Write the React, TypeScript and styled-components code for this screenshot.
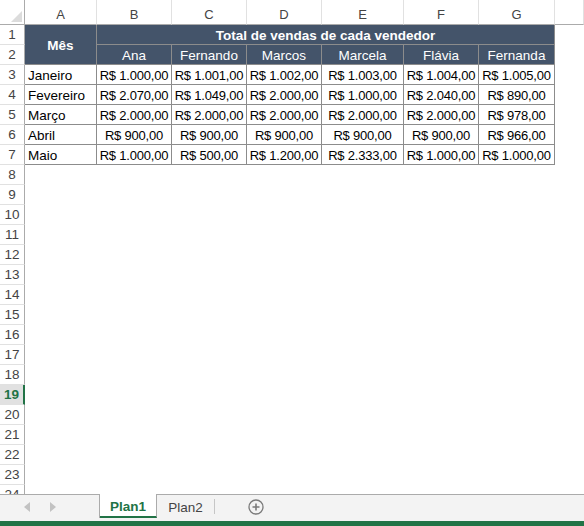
import React from "react";
import styled, { createGlobalStyle, css } from "styled-components";

const GlobalStyle = createGlobalStyle`
	* { box-sizing: border-box; }
	body {
		margin: 0;
		background: #fff;
		font-family: "Liberation Sans", Arial, sans-serif;
	}
`;

const COLUMNS = ["A", "B", "C", "D", "E", "F", "G", ""];
const SELLERS = ["Ana", "Fernando", "Marcos", "Marcela", "Flávia", "Fernanda"];
const SALES: [string, string[]][] = [
	["Janeiro", ["1.000,00", "1.001,00", "1.002,00", "1.003,00", "1.004,00", "1.005,00"]],
	["Fevereiro", ["2.070,00", "1.049,00", "2.000,00", "1.000,00", "2.040,00", "890,00"]],
	["Março", ["2.000,00", "2.000,00", "2.000,00", "2.000,00", "2.000,00", "978,00"]],
	["Abril", ["900,00", "900,00", "900,00", "900,00", "900,00", "966,00"]],
	["Maio", ["1.000,00", "500,00", "1.200,00", "2.333,00", "1.000,00", "1.000,00"]],
];
const ROW_COUNT = 24;
const ACTIVE_ROW = 19;

const Window = styled.div`
	width: 584px;
	height: 526px;
	display: flex;
	flex-direction: column;
	overflow: hidden;
`;

const SheetArea = styled.div`
	height: 494px;
	overflow: hidden;
	flex-shrink: 0;
`;

const Grid = styled.div`
	display: grid;
	grid-template-columns: 25px 72px 75px 75px 75px 82px 75px 76px 1fr;
	grid-template-rows: 25px repeat(${ROW_COUNT}, 20px);
	font-size: 13px;
	color: #000;
`;

const Corner = styled.div`
	border-right: 1px solid #ababab;
	border-bottom: 1px solid #ababab;
	display: flex;
	align-items: flex-end;
	justify-content: flex-end;
	padding: 0 2px 2px 0;
`;

const ColHeader = styled.div`
	border-bottom: 1px solid #ababab;
	border-right: 1px solid #e1e1e1;
	display: flex;
	align-items: center;
	justify-content: center;
	padding-top: 4px;
	color: #444;
`;

const RowHeader = styled.div<{ $active?: boolean }>`
	grid-column: 1;
	border-right: 1px solid #ababab;
	border-bottom: 1px solid #e1e1e1;
	display: flex;
	align-items: center;
	justify-content: center;
	color: #444;
	font-size: 13.5px;
	${(p) =>
		p.$active &&
		css`
			background: #e1e1e1;
			border-right: 2px solid #217346;
			color: #217346;
			font-weight: bold;
		`}
`;

const HeadCell = styled.div<{ $bold?: boolean; $cols?: number; $rows?: number }>`
	grid-column: span ${(p) => p.$cols ?? 1};
	grid-row: span ${(p) => p.$rows ?? 1};
	background: #44546a;
	color: #fff;
	border-right: 1px solid #8c8c8c;
	border-bottom: 1px solid #8c8c8c;
	display: flex;
	align-items: center;
	justify-content: center;
	padding-top: 1px;
	font-size: 13.5px;
	font-weight: ${(p) => (p.$bold ? "bold" : "normal")};
	white-space: nowrap;
`;

const Cell = styled.div<{ $left?: boolean }>`
	border-right: 1px solid #8c8c8c;
	border-bottom: 1px solid #8c8c8c;
	display: flex;
	align-items: center;
	justify-content: ${(p) => (p.$left ? "flex-start" : "center")};
	padding: 1px 3px 0;
	white-space: nowrap;
	overflow: hidden;
	font-size: ${(p) => (p.$left ? "13.5px" : "13px")};
	letter-spacing: ${(p) => (p.$left ? "0" : "-0.2px")};
`;

const Empty = styled.div``;

const TabBar = styled.div`
	height: 27px;
	flex-shrink: 0;
	background: #f3f3f3;
	border-top: 1px solid #ababab;
	display: flex;
	align-items: stretch;
`;

const NavArea = styled.div`
	width: 100px;
	display: flex;
	align-items: center;
	gap: 20px;
	padding-left: 24px;
	border-right: 1px solid #ababab;
	margin-bottom: 3px;
`;

const SheetTab = styled.div<{ $active?: boolean }>`
	width: 57px;
	display: flex;
	align-items: center;
	justify-content: center;
	font-size: 13.5px;
	color: #444;
	margin-bottom: 3px;
	padding-top: 2px;
	${(p) =>
		p.$active &&
		css`
			background: #fff;
			color: #217346;
			font-weight: bold;
			border-right: 1px solid #ababab;
			border-bottom: 2px solid #217346;
			margin-top: -1px;
			padding-top: 3px;
		`}
`;

const Divider = styled.div`
	width: 1px;
	background: #c6c6c6;
	margin: 4px 0 7px;
`;

const AddButton = styled.div`
	margin-left: 33px;
	display: flex;
	align-items: center;
	margin-bottom: 3px;
	padding-top: 1px;
`;

const StatusBar = styled.div`
	height: 5px;
	background: #217346;
	flex-shrink: 0;
`;

const Arrow = ({ dir }: { dir: "left" | "right" }) => (
	<svg width="6" height="10" viewBox="0 0 6 10">
		{dir === "left" ? (
			<polygon points="6,0 6,10 0,5" fill="#c2c2c2" />
		) : (
			<polygon points="0,0 0,10 6,5" fill="#c2c2c2" />
		)}
	</svg>
);

const App = () => {
	const rows = Array.from({ length: ROW_COUNT }, (_, i) => i + 1);

	return (
		<>
			<GlobalStyle />
			<Window>
				<SheetArea>
					<Grid>
						<Corner>
							<svg width="11" height="11" viewBox="0 0 11 11">
								<polygon points="11,0 11,11 0,11" fill="#dcdcdc" />
							</svg>
						</Corner>
						{COLUMNS.map((c, i) => (
							<ColHeader key={"col" + i}>{c}</ColHeader>
						))}

						{rows.map((r) => {
							const cells: React.ReactNode[] = [
								<RowHeader key={"rh" + r} $active={r === ACTIVE_ROW}>
									{r}
								</RowHeader>,
							];
							if (r === 1) {
								cells.push(
									<HeadCell key="mes" $bold $rows={2}>
										Mês
									</HeadCell>,
									<HeadCell key="total" $bold $cols={6}>
										Total de vendas de cada vendedor
									</HeadCell>,
									<Empty key="e1" />
								);
							} else if (r === 2) {
								SELLERS.forEach((s) => cells.push(<HeadCell key={s}>{s}</HeadCell>));
								cells.push(<Empty key="e2" />);
							} else if (r <= 7) {
								const [month, values] = SALES[r - 3];
								cells.push(
									<Cell key={month} $left>
										{month}
									</Cell>
								);
								values.forEach((v, i) =>
									cells.push(<Cell key={month + i}>R$ {v}</Cell>)
								);
								cells.push(<Empty key={"e" + r} />);
							} else {
								COLUMNS.forEach((_, i) => cells.push(<Empty key={"e" + r + i} />));
							}
							return cells;
						})}
					</Grid>
				</SheetArea>

				<TabBar>
					<NavArea>
						<Arrow dir="left" />
						<Arrow dir="right" />
					</NavArea>
					<SheetTab $active>Plan1</SheetTab>
					<SheetTab>Plan2</SheetTab>
					<Divider />
					<AddButton>
						<svg width="16" height="16" viewBox="0 0 16 16">
							<circle cx="8" cy="8" r="7" fill="none" stroke="#7a7a7a" strokeWidth="1.3" />
							<path d="M8 4.5v7M4.5 8h7" stroke="#7a7a7a" strokeWidth="1.6" />
						</svg>
					</AddButton>
				</TabBar>
				<StatusBar />
			</Window>
		</>
	);
};

export default App;
